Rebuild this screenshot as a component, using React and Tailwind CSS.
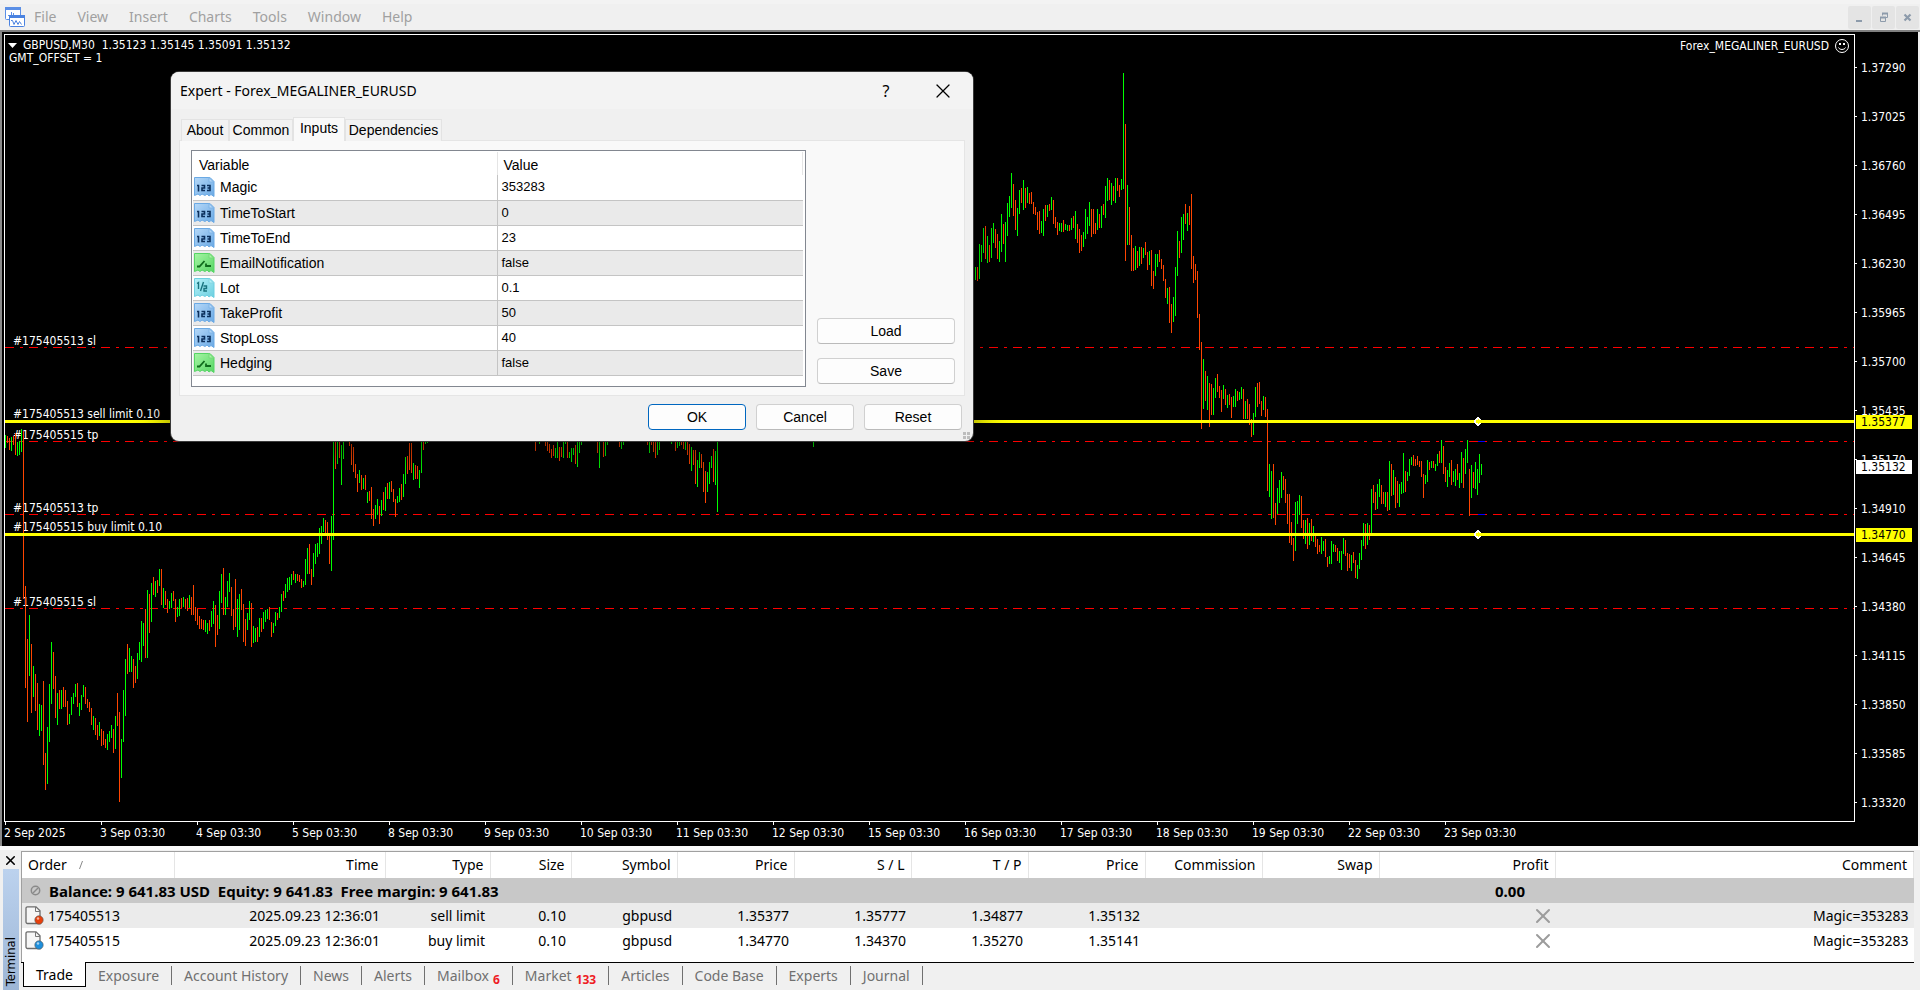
import { X } from 'lucide-react';

const SANS = "font-['Noto_Sans',sans-serif]";
const CHART_FONT = "font-['DejaVu_Sans_Condensed','DejaVu_Sans',sans-serif]";

const MENU = ['File', 'View', 'Insert', 'Charts', 'Tools', 'Window', 'Help'];

const PRICES = [
  '1.37290', '1.37025', '1.36760', '1.36495', '1.36230', '1.35965', '1.35700', '1.35435',
  '1.35170', '1.34910', '1.34645', '1.34380', '1.34115', '1.33850', '1.33585', '1.33320',
];

const DATES = [
  '2 Sep 2025', '3 Sep 03:30', '4 Sep 03:30', '5 Sep 03:30', '8 Sep 03:30', '9 Sep 03:30',
  '10 Sep 03:30', '11 Sep 03:30', '12 Sep 03:30', '15 Sep 03:30', '16 Sep 03:30', '17 Sep 03:30',
  '18 Sep 03:30', '19 Sep 03:30', '22 Sep 03:30', '23 Sep 03:30',
];

// Bars come in runs: first x, then high-low for every bar, 2px apart (u = up, d = down)
const RUNS = [
  [5, `u435-448 d436-443 d438-450 u437-451 d436-445 d433-455 u442-456 u441-455 u429-452 d431-599
    d586-688 d639-722 u615-676 d644-713 u666-697 d674-711 d683-730 u704-736 u705-731 d681-765
    d753-790 u727-784 u684-742 u642-704 d652-689 d676-718 u693-725 d690-709 u690-709 d687-707
    d690-707 d701-725 u714-724 u697-715 u693-704 u684-697 d683-707 u703-716 u695-710 u685-697
    d687-704 d699-708 d702-712 d708-725 u716-730 d718-735 d725-740 u722-736 d729-746 d731-745
    d739-748 u734-750 u731-742 u725-738 d729-753 u716-749 d693-726 d712-802 u739-778 u690-742
    u659-716 d644-674 u648-672 u656-672 d659-688 d666-683 u653-679 u642-660 u621-662 u623-646
    d609-658 u590-658 d594-633 u583-622 d577-595 u581-597 d580-593 u569-586 d569-605 u588-608
    d591-605 d599-613 u601-609 u593-608 d591-601 d599-622 u607-617 u599-616 d598-608 u597-607
    d599-609 d598-611 u595-608 d597-615 d585-615 d607-621 d609-625 d616-629 d619-629 d620-630
    u620-632 u623-634 d620-631 u611-627 u601-624 d605-647 d615-635 u591-629 u574-603 d568-615
    u597-615 u581-607 u573-592 d587-616 d609-630 d579-627 u599-637 u594-630 d589-610 d604-642
    d619-646 u613-630 u601-620 d603-647 u626-643 u628-642 d627-642 u618-637 d618-632 u612-629
    u610-622 u609-619 d607-620 d622-637 u623-633 u612-626 d613-620 u607-618 u594-612 d591-601
    u584-598 u578-592 u577-590 u574-585 d571-580 u574-583 d574-581 d575-582 d579-588 u581-587
    u559-585 u548-574 d544-574 d569-585 u553-577 u544-564 u543-557 u528-554 u526-544 u518-532
    d520-534 d522-540 d533-564 u516-571 u430-540 d430-469 u430-464 d430-458 u445-485 u430-459`],
  [349, `d436-446 d444-465 d447-472 d464-478 d474-492 u470-483 d475-490 u478-489 d475-490 u492-503
    d491-501 d487-519 d509-526 u505-519 u499-515 d506-524 u500-516 d492-510 u487-511 d483-499
    u482-499 d481-492 d489-502 d499-517 u496-503 u488-502 d484-500 u474-497 u457-484 d456-474
    d443-470 d443-473 u463-480 d465-479 d466-479 u470-488 u430-473 d430-450 u430-444 u430-443`],
  [535, 'd430-451'],
  [539, 'u430-444'],
  [545, `d430-446 d430-451 d444-453 d449-458 d445-456 u448-458 u430-458 d447-461 d447-457 u430-458
    u430-444 d430-458 u452-458 u448-462 u448-455 d445-464 u430-467 u430-453 u430-445`],
  [597, 'd430-453 u430-468'],
  [603, 'd430-457 u430-456 u430-445'],
  [619, 'd430-447 u430-449 u430-445'],
  [647, 'd430-445 u430-453 d430-445 d430-452 d430-458 u430-455 u430-450'],
  [671, 'u430-444'],
  [675, `d430-451 u430-448 u430-446 d430-445 d430-449 u430-450 d430-455 d444-464 u447-471 d450-465
    d450-484 u460-487 u452-468 d454-468 d462-492 d471-503 u472-492 u462-484 u456-468 d449-482
    u451-485 u430-512`],
  [813, 'u430-447'],
  [973, `u275-284 u267-280 d267-281 u244-279 u245-262 u228-253 d226-259 u236-263 d245-262 u228-258
    u223-243 d229-248 d234-259 u241-262 u214-252 d224-244 u222-262 u203-236 u196-217 u173-208
    d184-216 d200-230 u208-236 u190-214 d188-203 u180-210 d188-208 u187-203 d193-204 d192-204
    d202-214 d207-215 d212-230 d211-234 u221-233 u209-236 d205-221 u205-217 d204-211 u197-210
    d200-224 d217-228 d222-235 u223-231 u223-232 d220-232 u224-230 u225-231 d225-231 u218-230
    d216-228 u211-239 d224-243 d229-253 d235-251 u232-247 u209-239 u217-234 u202-226 d209-237
    d209-234 d223-234 u209-230 d214-228 u206-228 d204-215 u186-218 u178-201 d180-200 u183-205
    d186-201 u178-203 d178-191 d185-197 u179-190 u73-189 d124-261 u185-245 d207-245 d235-271
    d248-271 u246-270 d251-268 u247-266 d247-264 u248-258 d242-255 d252-270 u251-265 d250-286
    d271-289 u254-276 u254-267 d250-262 d259-269 d265-281 d279-298 u288-304 d287-323 d304-333
    u297-322 u267-316 u231-276 d241-258 u217-253 u214-240 d204-224 u213-231 d206-225 d194-269
    d256-283 d264-280 d271-318 d314-350 d342-429 u359-409 d371-401 u376-410 d383-427 d384-415
    u388-415 u378-398 d374-392 d386-398 d390-412 u385-399 d389-405 u395-408 d394-405 d397-418
    u396-407 u389-407 d391-401 u392-400 u387-399 d389-419 u401-419 d399-419 d404-425 d419-437
    u413-435 u387-417 d383-407 d382-404 d401-416 u396-410 d397-417 d409-491 u464-497 u471-519
    d464-518 d503-525 u488-514 u480-503 u472-498 d476-490 d479-503 d494-524 d494-543 d522-545
    d538-561 u502-551 u501-524 u495-515 d496-528 d520-539 u520-544 d518-549 u523-545 d519-541
    u526-542 d533-547 d539-554 d545-552 u537-554 u541-551 d539-557 d557-567 u556-564 u541-564
    u544-552 d545-552 d548-561 u551-563 u551-570 u538-554 d540-556 d553-571 d554-568 u555-571
    d552-563 d560-578 u565-579 u553-569 u540-560 u523-546 d524-549 u523-545 d525-540 u489-533
    d485-503 d492-510 u484-509 u479-497 d485-504 d492-504 u492-507 d492-511 u461-510 d464-496
    u470-495 d477-508 d481-503 u484-507 u482-494 u453-493 d471-492 u472-481 u459-476 u457-465
    d455-466 d459-466 d456-465 d461-467 d461-477 d474-498 u475-484 u460-482 d462-470 u461-468
    d461-468 u464-471 u454-466 d451-463 u440-463 d446-474 d467-482 u470-487 u463-477 d460-485
    u471-482 u469-486 d464-480 u473-488 u452-483 d458-488 u449-474 u440-463 d469-516 u465-498
    d472-488 u462-489 u469-495 u454-483 u464-475`],
];

// Offset of the plot area inside the window
const PLOT_X = 5;
const PLOT_Y = 35;

const barPath = (dir) => RUNS.map(([x0, run]) =>
  run.split(/\s+/).map((bar, i) => {
    if (bar[0] !== dir) return '';
    const [hi, lo] = bar.slice(1).split('-').map(Number);
    return `M${x0 + i * 2 - PLOT_X} ${hi - PLOT_Y}h1V${lo - PLOT_Y}h-1z`;
  }).join('')
).join('');

const UP_BARS = barPath('u');
const DOWN_BARS = barPath('d');

const STOPS = [
  { y: 312, label: '#175405513 sl' },
  { y: 406, label: '#175405515 tp' },
  { y: 479, label: '#175405513 tp' },
  { y: 573, label: '#175405515 sl' },
];

const PENDING = [
  { y: 385, label: '#175405513 sell limit 0.10' },
  { y: 498, label: '#175405515 buy limit 0.10' },
];

const INPUTS = [
  { name: 'Magic', value: '353283', type: 'int' },
  { name: 'TimeToStart', value: '0', type: 'int' },
  { name: 'TimeToEnd', value: '23', type: 'int' },
  { name: 'EmailNotification', value: 'false', type: 'bool' },
  { name: 'Lot', value: '0.1', type: 'double' },
  { name: 'TakeProfit', value: '50', type: 'int' },
  { name: 'StopLoss', value: '40', type: 'int' },
  { name: 'Hedging', value: 'false', type: 'bool' },
];

const ICON_COLORS = {
  int: { from: '#b5d8f8', to: '#6aa9e4', fold: '#7fb4e6', ink: '#0b2f5c' },
  bool: { from: '#a6f5a4', to: '#55d564', fold: '#74d978', ink: '#0f6b1c' },
  double: { from: '#b4f1f8', to: '#6ccfe0', fold: '#86d6e2', ink: '#19747f' },
};

const COLUMNS = [
  { title: 'Order', cls: 'w-[152px]' },
  { title: 'Time', cls: 'w-[211px]' },
  { title: 'Type', cls: 'w-[105px]' },
  { title: 'Size', cls: 'w-[81px]' },
  { title: 'Symbol', cls: 'w-[106px]' },
  { title: 'Price', cls: 'w-[117px]' },
  { title: 'S / L', cls: 'w-[117px]' },
  { title: 'T / P', cls: 'w-[117px]' },
  { title: 'Price', cls: 'w-[117px]' },
  { title: 'Commission', cls: 'w-[117px]' },
  { title: 'Swap', cls: 'w-[117px]' },
  { title: 'Profit', cls: 'w-[176px]' },
  { title: 'Comment', cls: '' },
];

const ORDERS = [
  { id: '175405513', dot: '#e8400c', cells: ['2025.09.23 12:36:01', 'sell limit', '0.10', 'gbpusd', '1.35377', '1.35777', '1.34877', '1.35132', '', ''] },
  { id: '175405515', dot: '#1e8fdc', cells: ['2025.09.23 12:36:01', 'buy limit', '0.10', 'gbpusd', '1.34770', '1.34370', '1.35270', '1.35141', '', ''] },
];

const TABS = [
  { name: 'Exposure' }, { name: 'Account History' }, { name: 'News' }, { name: 'Alerts' },
  { name: 'Mailbox', count: 6 }, { name: 'Market', count: 133 }, { name: 'Articles' },
  { name: 'Code Base' }, { name: 'Experts' }, { name: 'Journal' },
];

function AppIcon() {
  return (
    <svg width="20" height="20" viewBox="0 0 20 20" fill="none" className="shrink-0">
      <rect x="0.5" y="0.5" width="15" height="12" rx="1" fill="#fff" stroke="#5b8fe6" />
      <path d="M0 0h16v3H0z" fill="#5b8fe6" />
      <path d="M3 8.500h2M6.500 5v5M8.500 6v3" stroke="#5b8fe6" />
      <rect x="4.500" y="8.500" width="15" height="11" rx="1" fill="#fff" stroke="#4a82e0" />
      <path d="M4 8h16v3H4z" fill="#4a82e0" />
      <path d="M6 13.500l1.500 0 1.500 4 2-4 2 4 1.500-3 2 3" stroke="#4a82e0" />
    </svg>
  );
}

function WindowControls() {
  const cls = 'w-[23px] h-[23px] bg-[#e4e4e4] text-[#8d9bab] rounded-xs flex items-center justify-center';
  return (
    <div className="flex gap-px">
      <button aria-label="Minimize" className={cls}>
        <svg width="11" height="11"><path d="M2 8h6v2H2z" fill="currentColor" /></svg>
      </button>
      <button aria-label="Restore" className={cls}>
        <svg width="11" height="11" fill="none" stroke="currentColor">
          <path d="M4.500 3.500v-2h5v4h-2" />
          <path d="M4 1.500h6M2 5.500h6" strokeWidth="2" />
          <path d="M2.500 5.500h5v4h-5z" />
        </svg>
      </button>
      <button aria-label="Close" className={cls}>
        <svg width="11" height="11"><path d="M2.500 2.500l6 6M8.500 2.500l-6 6" stroke="currentColor" strokeWidth="2.200" /></svg>
      </button>
    </div>
  );
}

function Plot() {
  return (
    <svg className="absolute inset-0 w-full h-full" fontSize="12" fill="#fff">
      <g shapeRendering="crispEdges">
        {STOPS.map(s => (
          <line key={s.y} x1="0" x2="100%" y1={s.y + 0.5} y2={s.y + 0.5} stroke="#f00" strokeDasharray="9 6 3 6" />
        ))}
        <path d="M1473 406h7v1h-7zM1473 479h7v1h-7z" fill="#00f" />
      </g>
      {[...STOPS, ...PENDING].map(s => (
        <text key={s.label} x="8" y={s.y - 2}>{s.label}</text>
      ))}
      <g shapeRendering="crispEdges">
        <path d={UP_BARS} fill="#0f0" />
        <path d={DOWN_BARS} fill="#ff4500" />
        {PENDING.map(p => (
          <g key={p.y}>
            <rect x="0" y={p.y} width="100%" height="3" fill="#ff0" />
            <path
              transform={`translate(1470 ${p.y - 3})`}
              d="M2 0h2v1h1v1h1v5h-1v1h-1v1h-2v-1h-1v-1h-1v-1h-1v-3h1v-1h1v-1h1z"
              fill="#fff"
            />
            <path transform={`translate(1470 ${p.y - 3})`} d="M3 2h1v1h2v3h-2v1h-1v-1h-2v-3h2z" fill="#ff0" />
          </g>
        ))}
      </g>
    </svg>
  );
}

function Smiley() {
  return (
    <svg width="14" height="14" viewBox="0 0 14 14" fill="none" stroke="#fff" className="ml-1.5">
      <circle cx="7" cy="7" r="6.500" />
      <path d="M3.500 8.500c1 2.600 6 2.600 7 0" />
      <path d="M4 4h2v2H4zM8 4h2v2H8z" fill="#fff" stroke="none" />
    </svg>
  );
}

function PriceTag({ top, color, children }) {
  return (
    <span className={`absolute left-px w-14 h-3.5 pl-[5px] text-xs leading-3.5 text-black ${top} ${color}`}>
      {children}
    </span>
  );
}

function TypeIcon({ type }) {
  const c = ICON_COLORS[type];
  return (
    <svg width="21" height="20" viewBox="0 0 21 20" fill="none" className="shrink-0">
      <linearGradient id={`fill-${type}`} x1="0" y1="0" x2="1" y2="1">
        <stop offset="0" stopColor={c.from} />
        <stop offset="1" stopColor={c.to} />
      </linearGradient>
      <path
        d="M.500.500h15.500l4 4v15l-3-2-2 1.500-2-2-2 1.500-3-1.500-2 1.500-2-1.500-3.500 1.500z"
        fill={`url(#fill-${type})`} stroke={c.to} strokeLinejoin="round"
      />
      <path d="M15 .5v4.500h4.500z" fill={c.from} stroke={c.fold} />
      {type === 'int' && (
        <path d="M3 8.500h1.500v6M7.500 8.500h3v2.500h-2.500v2.500h3M13 8.500h3v5h-3M13.500 11h2.500" stroke={c.ink} strokeWidth="1.600" />
      )}
      {type === 'bool' && (
        <path d="M3 13.500h2.500l5-5.500M12 10.500v2.500h5" stroke={c.ink} strokeWidth="1.800" />
      )}
      {type === 'double' && (
        <path d="M3 5.500l1.500-1v6.500M9.500 4l-3 9M9.500 8h3v2.500h-2.500v2.500h3" stroke={c.ink} strokeWidth="1.400" />
      )}
    </svg>
  );
}

function DialogButton({ primary, wide, children }) {
  return (
    <button
      className={`h-[26px] rounded border bg-[#fdfdfd] ${wide ? 'w-[138px]' : 'w-[98px]'} ${
        primary ? 'border-[#0067c0]' : 'border-[#d0d0d0] border-b-[#bababa]'
      }`}
    >
      {children}
    </button>
  );
}

function ExpertDialog() {
  const tab = 'h-[22px] pb-px border border-b-0 border-[#e3e3e3] bg-[#f2f2f2]';
  return (
    <div
      role="dialog"
      aria-labelledby="expert-title"
      className="absolute left-[171px] top-10 w-[802px] h-[369px] flex flex-col rounded-lg bg-[#f0f0f0] overflow-hidden text-black text-sm leading-4 shadow-[0_0_0_1px_#3a3a3a,0_12px_36px_rgba(0,0,0,0.5)] font-['Liberation_Sans',Arial,sans-serif]"
    >
      <div className={`h-[37px] shrink-0 bg-[#f3f3f3] flex items-center pl-[9px] pr-[18px] ${SANS}`}>
        <h2 id="expert-title" className="flex-1">Expert - Forex_MEGALINER_EURUSD</h2>
        <button aria-label="Help" className="w-5 mr-[35px] text-base">?</button>
        <button aria-label="Close"><X size={24} strokeWidth={1.200} /></button>
      </div>

      <div role="tablist" className="flex items-end h-8 px-[9px] shrink-0 relative z-10 -mb-px">
        <button role="tab" className={`${tab} w-12 ml-px`}>About</button>
        <button role="tab" className={`${tab} w-16`}>Common</button>
        <button role="tab" aria-selected="true" className="h-6 w-[52px] pb-1 border border-b-0 border-[#e3e3e3] bg-[#f9f9f9]">Inputs</button>
        <button role="tab" className={`${tab} w-[97px]`}>Dependencies</button>
      </div>

      <div className="mx-2 h-64 shrink-0 border border-[#e5e5e5] bg-[#f9f9f9] flex pl-[11px] pt-[9px] pb-2 pr-[9px]">
        <div className="flex-1 h-[237px] bg-white border border-[#828790] p-px pr-0.5">
          <table className="w-full table-fixed border-collapse text-left">
            <thead>
              <tr className="h-[23px]">
                <th className="w-[304px] pl-1.5 pt-0.5 font-normal border-r border-[#e5e5e5]">Variable</th>
                <th className="pl-1.5 pt-0.5 font-normal border-r border-[#e5e5e5]">Value</th>
              </tr>
            </thead>
            <tbody>
              {INPUTS.map(row => (
                <tr key={row.name} className="h-[25px] border-b border-[#c4c4c4] even:bg-[#eaeaea]">
                  <td className="p-0 pl-px border-r border-[#c4c4c4]">
                    <span className="flex items-center gap-[5px]">
                      <TypeIcon type={row.type} />
                      {row.name}
                    </span>
                  </td>
                  <td className="p-0 pl-1 text-[13px]">{row.value}</td>
                </tr>
              ))}
            </tbody>
          </table>
        </div>
        <div className="flex flex-col justify-end gap-3.5 pl-[11px] pb-[3px]">
          <DialogButton wide>Load</DialogButton>
          <DialogButton wide>Save</DialogButton>
        </div>
      </div>

      <div className="flex justify-end gap-2.5 pt-2 pr-[11px]">
        <DialogButton primary>OK</DialogButton>
        <DialogButton>Cancel</DialogButton>
        <DialogButton>Reset</DialogButton>
      </div>
      <svg width="7" height="7" className="absolute right-[3px] bottom-0.5">
        <path d="M0 0h3v3H0zM4 0h3v3H4zM0 4h3v3H0zM4 4h3v3H4z" fill="#bdbdbd" />
      </svg>
    </div>
  );
}

function ChartWindow() {
  return (
    <main className={`relative flex-1 flex bg-black text-white text-xs border-l-2 border-[#8a8a8a] mr-0.5 ${CHART_FONT}`}>
      <div className="flex-1 min-w-0 flex flex-col pl-0.5 pt-0.5">
        <div className="relative flex-1 border border-white">
          <Plot />
          <div className="relative flex justify-between leading-[13px] pt-1 pr-[5px]">
            <div className="pl-[3px]">
              <p className="flex items-center whitespace-pre">
                <svg width="9" height="5" className="mr-1.5"><path d="M0 0h9L4.500 5z" fill="#fff" /></svg>
                GBPUSD,M30  1.35123 1.35145 1.35091 1.35132
              </p>
              <p className="pl-px">GMT_OFFSET = 1</p>
            </div>
            <p className="flex items-center h-3.5">
              Forex_MEGALINER_EURUSD
              <Smiley />
            </p>
          </div>
        </div>
        <div className="h-6 flex overflow-hidden">
          {DATES.map(d => (
            <div key={d} className="w-24 shrink-0 whitespace-nowrap leading-4">
              <div className="ml-px w-px h-[3px] bg-white" />
              {d}
            </div>
          ))}
        </div>
      </div>

      {/* Price scale */}
      <div className="relative w-[63px] shrink-0 pt-[11px]">
        {PRICES.map(p => (
          <div key={p} className="h-[49px] flex items-center gap-1">
            <span className="w-0.5 h-px bg-white" />
            {p}
          </div>
        ))}
        <PriceTag top="top-[383px]" color="bg-[#ff0]">1.35377</PriceTag>
        <PriceTag top="top-[428px]" color="bg-white">1.35132</PriceTag>
        <PriceTag top="top-[496px]" color="bg-[#ff0]">1.34770</PriceTag>
      </div>
    </main>
  );
}

function OrderIcon({ dot }) {
  return (
    <svg width="19" height="19" viewBox="0 0 19 19" fill="none">
      <path d="M2.500.800h8.500l4 4v12.700h-12.500a1.500 1.500 0 0 1-1.500-1.500v-13.700a1.500 1.500 0 0 1 1.500-1.500z" fill="#f6f6f6" stroke="#6c6c6c" strokeWidth="1.300" />
      <path d="M10.500 1v4.500h4.500" stroke="#777" />
      <circle cx="14" cy="14" r="4.200" fill={dot} stroke="#555" strokeWidth="0.600" />
      <circle cx="13" cy="12.500" r="1.200" fill="#fff" opacity="0.600" />
    </svg>
  );
}

function Terminal() {
  return (
    <section className={`h-36 flex bg-[#f0f0f0] border-t-4 border-[#fafafa] text-black text-sm leading-5 ${SANS}`}>
      <aside className="w-[21px] shrink-0 flex flex-col items-center pt-0.5">
        <button aria-label="Close terminal" className="h-[17px] flex items-center"><X size={15} strokeWidth={2.500} /></button>
        <div className="flex-1 w-4 bg-linear-to-b from-[#bcd2ee] to-[#9db6d6] flex items-end justify-center pb-1">
          <span className={`[writing-mode:vertical-rl] rotate-180 text-[13px] leading-4 ${CHART_FONT}`}>Terminal</span>
        </div>
      </aside>

      <div className="flex-1 min-w-0 flex flex-col pt-px mr-1.5">
        <div className="h-[111px] bg-white border-t border-l border-[#a0a0a0]">
          <table className="w-full table-fixed border-collapse text-right">
            <thead>
              <tr className="h-[26px]">
                {COLUMNS.map((c, i) => (
                  <th key={i} className={`p-0 pr-1.5 font-normal border-r border-[#e5e5e5] ${c.cls}`}>
                    {i === 0 ? (
                      <span className="flex items-center gap-3 pl-1.5">
                        {c.title}
                        <svg width="4" height="8"><path d="M0.500 8l3-8" stroke="#888" /></svg>
                      </span>
                    ) : c.title}
                  </th>
                ))}
              </tr>
            </thead>
            <tbody>
              <tr className="h-[25px] bg-[#c8c8c8] font-bold text-[15px]">
                <td colSpan={11} className="p-0">
                  <span className="flex items-center pl-2">
                    <svg width="11" height="11" fill="none" stroke="#8a8a8a" strokeWidth="1.500" className="mr-2">
                      <circle cx="5.500" cy="5.500" r="4.200" />
                      <path d="M3 8l5-5" />
                    </svg>
                    <span className="whitespace-pre">Balance: 9 641.83 USD  Equity: 9 641.83  Free margin: 9 641.83</span>
                  </span>
                </td>
                <td className="p-0 pr-[30px]">0.00</td>
                <td />
              </tr>
              {ORDERS.map(o => (
                <tr key={o.id} className="h-[25px] odd:bg-white even:bg-[#ebebeb]">
                  <td className="p-0">
                    <span className="flex items-center gap-1 pl-[3px]">
                      <OrderIcon dot={o.dot} />
                      {o.id}
                    </span>
                  </td>
                  {o.cells.map((c, i) => <td key={i} className="p-0 pr-[5px]">{c}</td>)}
                  <td className="p-0">
                    <button aria-label={`Close order ${o.id}`} className="block ml-auto text-[#9c9c9c]">
                      <X size={24} strokeWidth={2} />
                    </button>
                  </td>
                  <td className="p-0 pr-[5px]">Magic=353283</td>
                </tr>
              ))}
            </tbody>
          </table>
        </div>

        <nav role="tablist" className="flex-1 flex border-t border-black text-[#707070]">
          <button role="tab" aria-selected="true" className="w-[63px] h-[25px] pt-0.5 ml-0.5 -mt-px bg-white text-black border border-t-0 border-black">
            Trade
          </button>
          {TABS.map(t => (
            <button key={t.name} role="tab" className="h-[19px] mt-[3px] px-3 flex items-center border-r border-[#707070]">
              {t.name}
              {t.count && <span className="ml-1 mt-2 text-xs font-bold text-[#ee1c25]">{t.count}</span>}
            </button>
          ))}
        </nav>
      </div>
    </section>
  );
}

export default function App() {
  return (
    <div className="min-h-screen flex flex-col bg-[#f0f0f0]">
      <header className={`h-8 shrink-0 flex items-center justify-between border-t-4 border-t-[#f3f3f3] border-b-2 border-b-[#808080] pl-[5px] pr-px text-sm text-[#a0a0a0] ${SANS}`}>
        <nav className="flex items-center gap-[21px]">
          <div className="flex items-center gap-[9px]">
            <AppIcon />
            <button>{MENU[0]}</button>
          </div>
          {MENU.slice(1).map(m => <button key={m}>{m}</button>)}
        </nav>
        <WindowControls />
      </header>
      <div className="relative flex-1 flex flex-col">
        <ChartWindow />
        <ExpertDialog />
      </div>
      <Terminal />
    </div>
  );
}
